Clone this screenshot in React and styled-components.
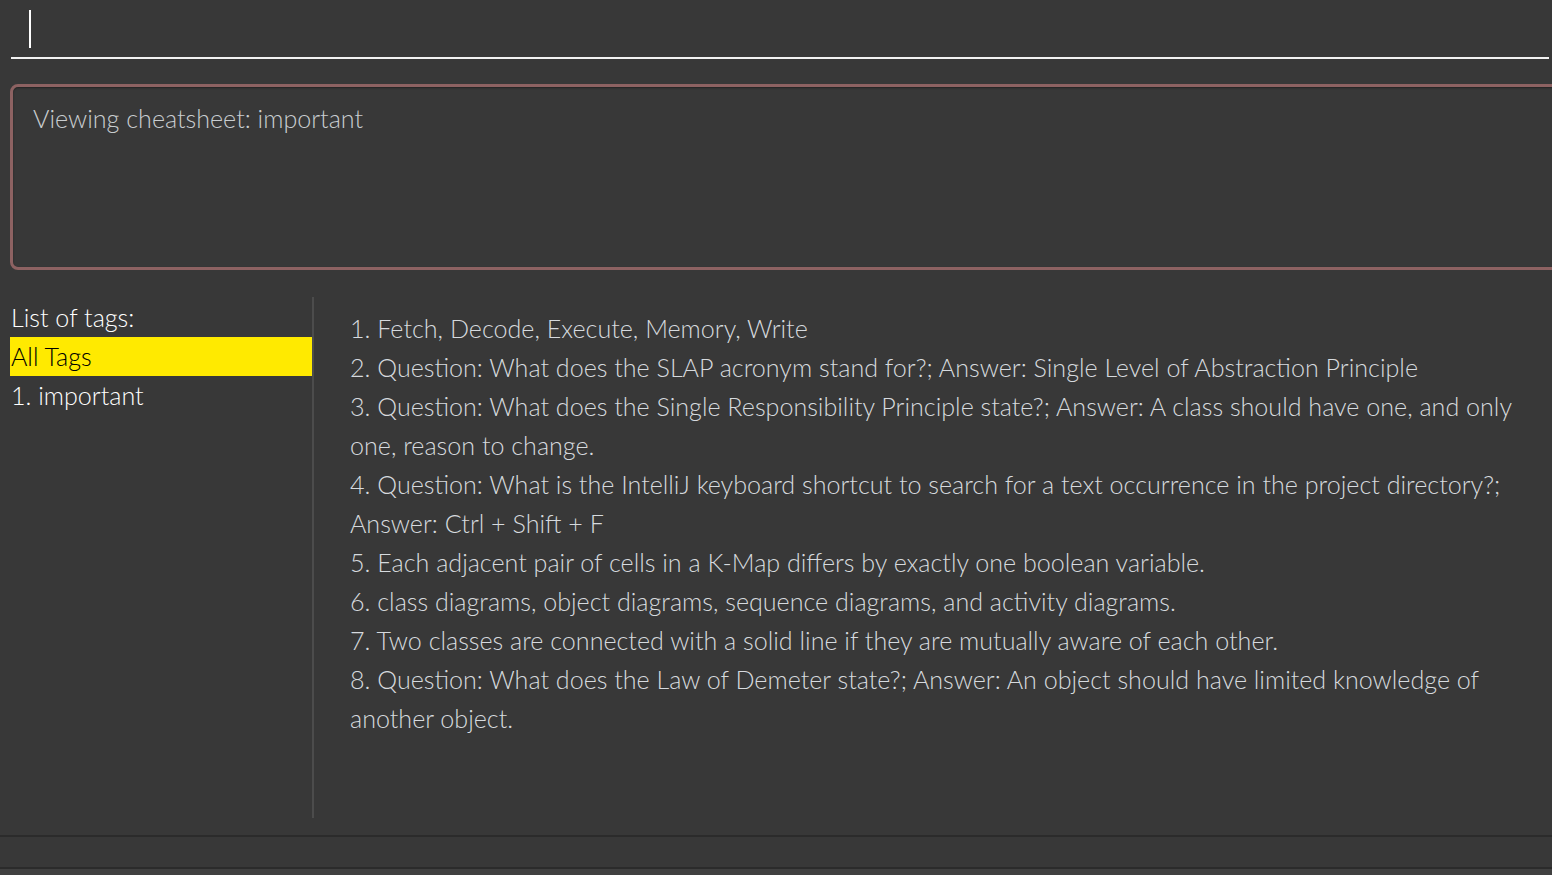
import React from 'react'
import styled, { createGlobalStyle } from 'styled-components'

const GlobalStyle = createGlobalStyle`
  html, body {
    margin: 0;
    padding: 0;
    background: #383838;
    overflow: hidden;
  }
  body {
    font-family: Lato, "Noto Sans", sans-serif;
  }
`

const Window = styled.div`
  width: 1552px;
  height: 875px;
  display: flex;
  flex-direction: column;
  background: #383838;
  overflow: hidden;
`

const CommandBox = styled.div`
  height: 59px;
  margin: 0 3px 0 11px;
  border-bottom: 2px solid #f2f2f2;
  display: flex;
  align-items: flex-start;
  padding: 10px 0 0 18px;
  box-sizing: border-box;
  flex-shrink: 0;
`

const Caret = styled.div`
  width: 2px;
  height: 38px;
  background: #ffffff;
`

const ResultBox = styled.div`
  margin: 25px -20px 0 10px;
  height: 186px;
  border: 3px solid #8d6262;
  border-radius: 8px;
  box-shadow: inset 0 1px 2px rgba(0, 0, 0, 0.4);
  box-sizing: border-box;
  padding: 16px 20px;
  color: #c9cdd0;
  font-size: 25.1px;
  font-weight: 300;
  flex-shrink: 0;
`

const Body = styled.div`
  display: flex;
  margin-top: 27px;
  height: 521px;
  flex-shrink: 0;
`

const TagPanel = styled.div`
  width: 302px;
  padding: 1px 0 0 10px;
  border-right: 2px solid #4c4c4c;
  display: flex;
  flex-direction: column;
`

const TagRow = styled.div`
  height: 39px;
  line-height: 39px;
  font-size: 25.1px;
  font-weight: 300;
  padding-left: 1px;
  color: ${p => (p.selected ? '#000000' : '#ffffff')};
  background: ${p => (p.selected ? '#ffea00' : 'transparent')};
  white-space: nowrap;
`

const Cards = styled.div`
  flex: 1;
  padding: 12px 22px 0 36px;
  color: #d6dade;
  font-size: 25.1px;
  font-weight: 300;
  line-height: 39px;
`

const Card = styled.div``

const StatusBar = styled.div`
  margin-top: 17px;
  height: 34px;
  border-top: 2px solid #2b2b2b;
  border-bottom: 2px solid #2b2b2b;
  box-sizing: border-box;
  flex-shrink: 0;
`

const Footer = styled.div`
  flex: 1;
  background: #404040;
`

const cards = [
  'Fetch, Decode, Execute, Memory, Write',
  'Question: What does the SLAP acronym stand for?; Answer: Single Level of Abstraction Principle',
  'Question: What does the Single Responsibility Principle state?; Answer: A class should have one, and only one, reason to change.',
  'Question: What is the IntelliJ keyboard shortcut to search for a text occurrence in the project directory?; Answer: Ctrl + Shift + F',
  'Each adjacent pair of cells in a K-Map differs by exactly one boolean variable.',
  'class diagrams, object diagrams, sequence diagrams, and activity diagrams.',
  'Two classes are connected with a solid line if they are mutually aware of each other.',
  'Question: What does the Law of Demeter state?; Answer: An object should have limited knowledge of another object.'
]

export default function App() {
  return (
    <>
      <GlobalStyle />
      <Window>
        <CommandBox>
          <Caret />
        </CommandBox>
        <ResultBox>Viewing cheatsheet: important</ResultBox>
        <Body>
          <TagPanel>
            <TagRow>List of tags:</TagRow>
            <TagRow selected>All Tags</TagRow>
            <TagRow>1. important</TagRow>
          </TagPanel>
          <Cards>
            {cards.map((c, i) => (
              <Card key={i}>{i + 1}. {c}</Card>
            ))}
          </Cards>
        </Body>
        <StatusBar />
        <Footer />
      </Window>
    </>
  )
}
